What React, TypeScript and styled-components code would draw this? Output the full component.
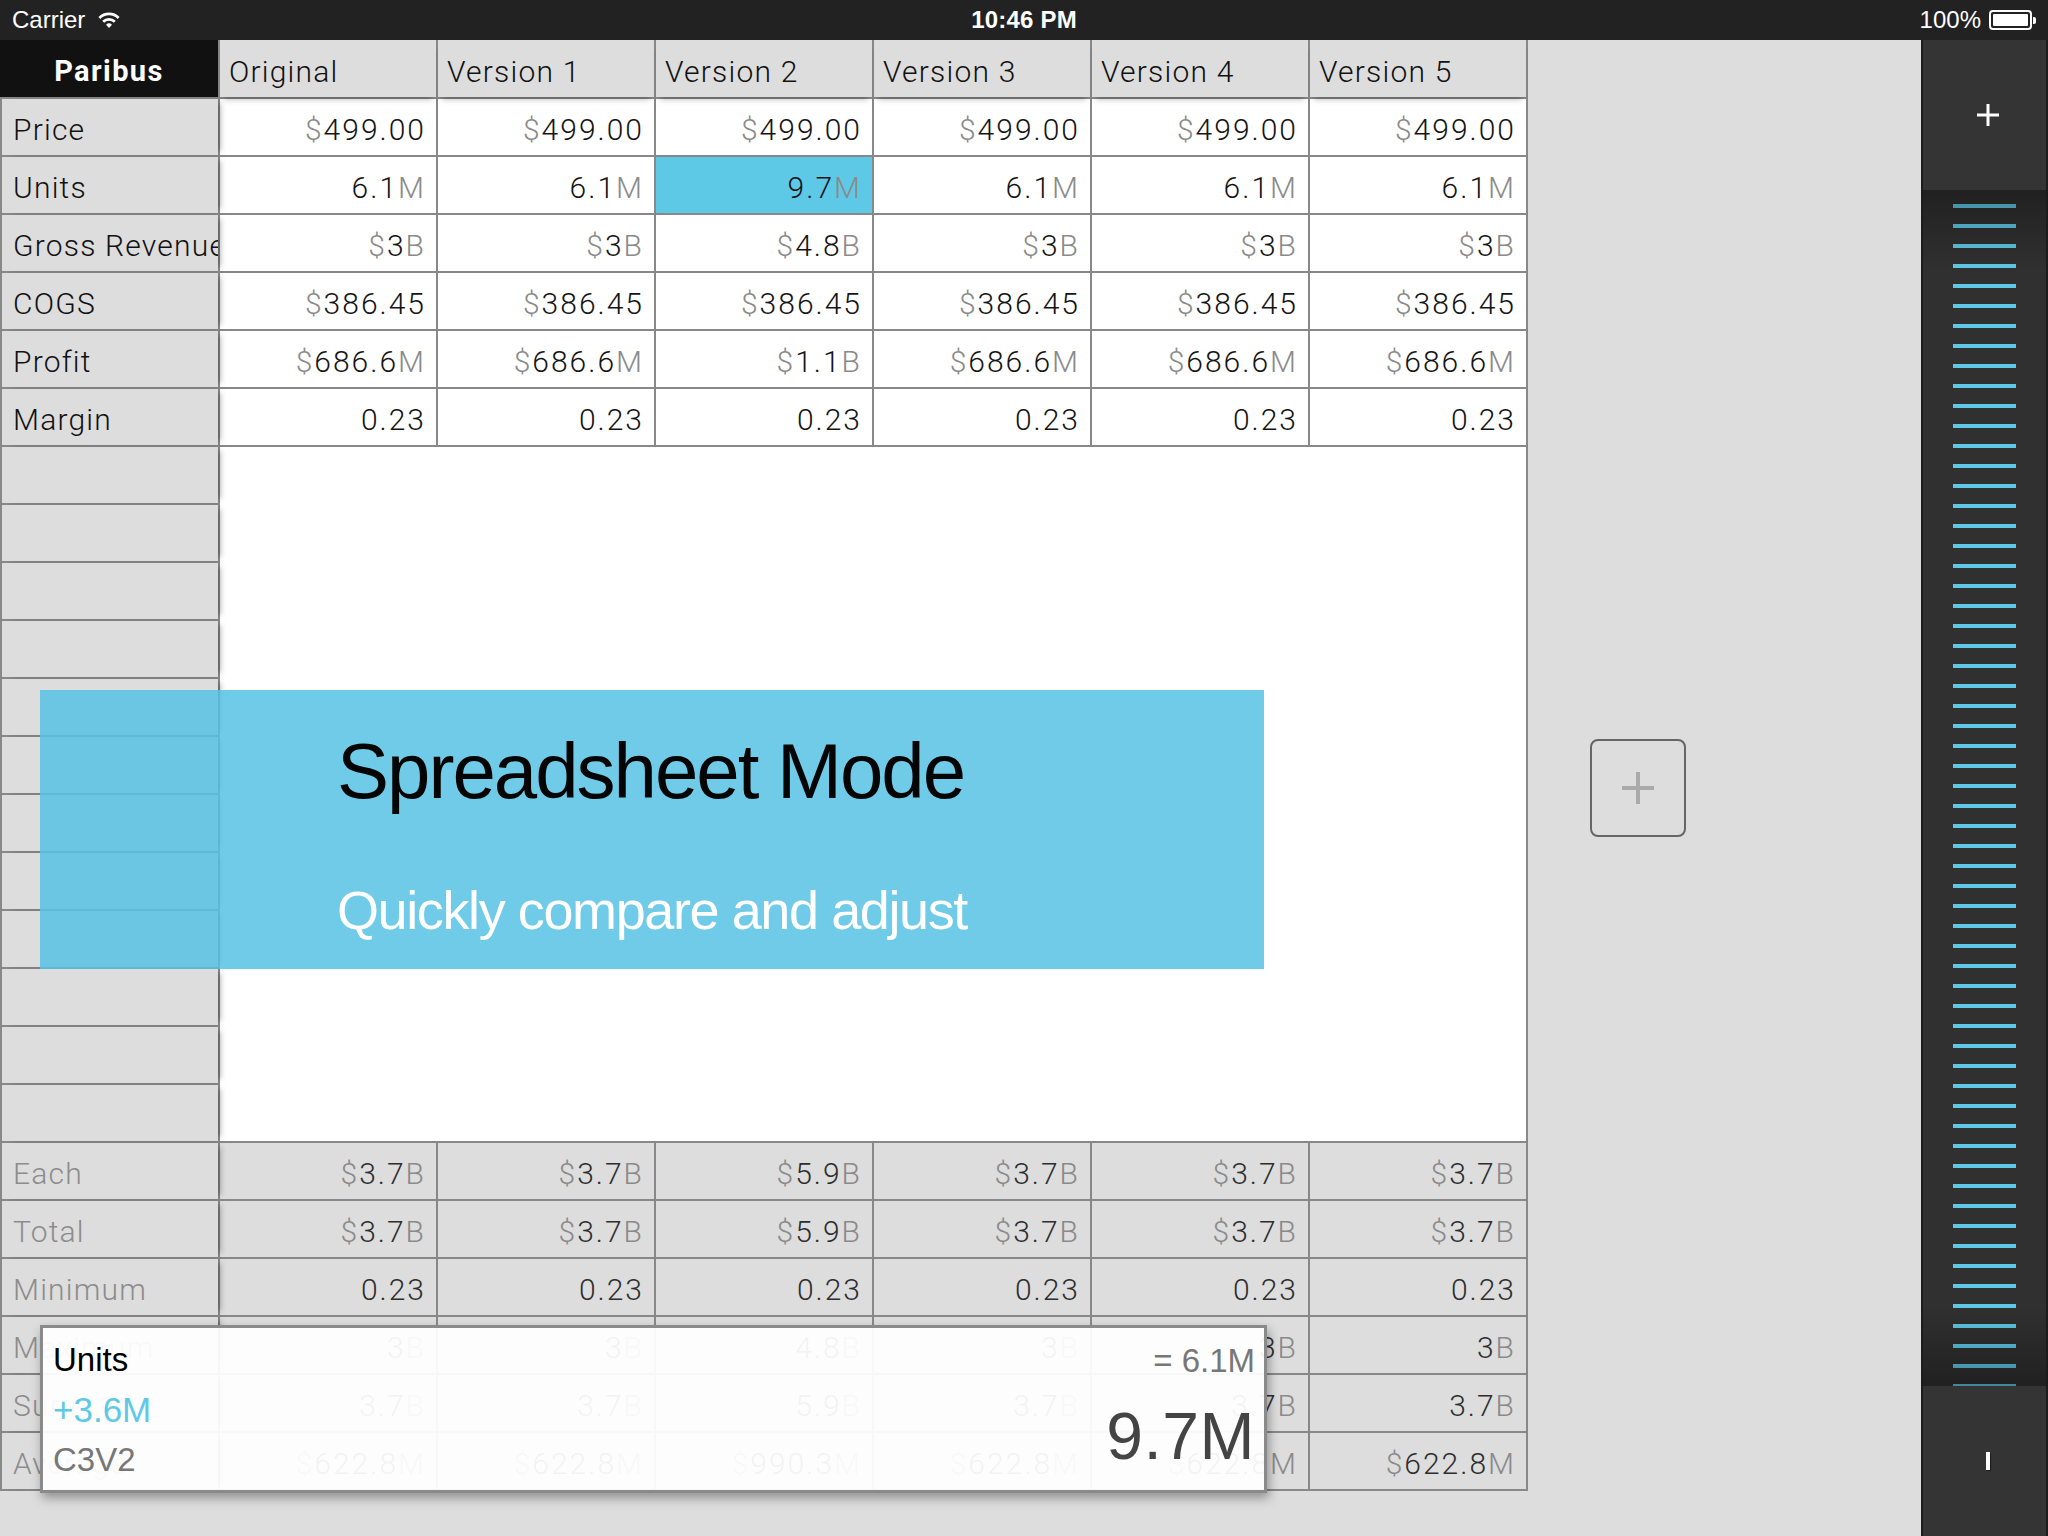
import React from "react";
import styled, { createGlobalStyle } from "styled-components";

const GlobalStyle = createGlobalStyle`
  html, body { margin: 0; padding: 0; background: #dddddd; }
  body {
    width: 2048px; height: 1536px; overflow: hidden;
    font-family: Roboto, "Liberation Sans", sans-serif;
  }
  #root { width: 2048px; height: 1536px; }
  * { box-sizing: border-box; }
`;

const Screen = styled.div`
  width: 2048px;
  height: 1536px;
  display: flex;
  flex-direction: column;
  background: #dddddd;
`;

/* ---------- status bar ---------- */
const StatusBar = styled.div`
  height: 40px;
  flex: none;
  background: #222222;
  color: #ffffff;
  display: grid;
  grid-template-columns: 1fr auto 1fr;
  align-items: center;
  padding: 0 12px;
  font-family: "Liberation Sans", Arial, sans-serif;
  font-size: 24px;
`;
const StatusLeft = styled.div`
  display: flex;
  align-items: center;
  gap: 12px;
`;
const StatusTime = styled.div`
  font-weight: 700;
  letter-spacing: 0.2px;
`;
const StatusRight = styled.div`
  display: flex;
  align-items: center;
  justify-content: flex-end;
  gap: 8px;
`;
const Battery = styled.div`
  width: 43px;
  height: 20px;
  border: 2px solid #ffffff;
  border-radius: 4px;
  padding: 2px;
  display: flex;
  margin-right: 4px;
  position: relative;
  &::after {
    content: "";
    position: absolute;
    right: -6px;
    top: 5px;
    width: 3px;
    height: 7px;
    background: #ffffff;
    border-radius: 0 2px 2px 0;
  }
`;
const BatteryFill = styled.div`
  flex: 1;
  background: #ffffff;
  border-radius: 1px;
`;

/* ---------- main ---------- */
const Main = styled.div`
  flex: 1;
  display: flex;
  min-height: 0;
`;
const TableArea = styled.div`
  width: 1528px;
  flex: none;
  position: relative;
`;
const Grid = styled.div`
  display: grid;
  grid-template-columns: 216px repeat(6, 216px);
  grid-template-rows: 57px repeat(24, 56px);
  gap: 2px;
  padding: 0 2px 2px 2px;
  background: #888888;
  width: 1528px;
  font-family: Roboto, "Liberation Sans", sans-serif;
  font-weight: 300;
  font-size: 30px;
  letter-spacing: 1.2px;
`;
const HeadCorner = styled.div`
  background: #111111;
  color: #ffffff;
  font-weight: 700;
  font-size: 29px;
  letter-spacing: 1.4px;
  display: flex;
  align-items: center;
  justify-content: center;
  padding-top: 5px;
  margin-left: -2px;
  position: relative;
  z-index: 3;
`;
const HeadCell = styled.div`
  background: #dddddd;
  color: #111111;
  display: flex;
  align-items: center;
  padding-left: 9px;
  padding-top: 5px;
  white-space: nowrap;
  position: relative;
  z-index: 1;
  box-shadow: 0 6px 6px -4px rgba(0, 0, 0, 0.3);
`;
const LabelCell = styled.div<{ $muted?: boolean }>`
  background: #dddddd;
  color: ${(p) => (p.$muted ? "#8c8c8c" : "#111111")};
  display: flex;
  align-items: center;
  padding-left: 11px;
  padding-top: 5px;
  white-space: nowrap;
  overflow: hidden;
  position: relative;
  z-index: 2;
  box-shadow: 6px 0 6px -4px rgba(0, 0, 0, 0.35);
`;
const DataCell = styled.div<{ $tone: "white" | "grey" | "hi" }>`
  background: ${(p) =>
    p.$tone === "hi" ? "#5ec9e6" : p.$tone === "grey" ? "#dddddd" : "#ffffff"};
  display: flex;
  align-items: center;
  justify-content: flex-end;
  padding-right: 10px;
  padding-top: 5px;
  white-space: nowrap;
  letter-spacing: 2px;
`;
const BlankArea = styled.div`
  grid-column: 2 / span 6;
  grid-row: span 12;
  background: #ffffff;
`;
const Affix = styled.span`
  color: #8a8a8a;
`;
const Digits = styled.span<{ $soft?: boolean }>`
  color: ${(p) => (p.$soft ? "#2e2e2e" : "#141414")};
`;

/* ---------- banner overlay ---------- */
const Banner = styled.div`
  position: absolute;
  left: 40px;
  top: 650px;
  width: 1224px;
  height: 279px;
  background: rgba(88, 195, 228, 0.86);
  z-index: 5;
  display: flex;
  flex-direction: column;
  padding: 42px 0 0 297px;
  font-family: "Liberation Sans", Arial, sans-serif;
`;
const BannerTitle = styled.div`
  font-size: 78px;
  line-height: 78px;
  letter-spacing: -2px;
  color: #050505;
`;
const BannerSub = styled.div`
  margin-top: 73px;
  font-size: 54px;
  line-height: 54px;
  letter-spacing: -1.4px;
  color: #ffffff;
`;

/* ---------- value popup ---------- */
const Popup = styled.div`
  position: absolute;
  left: 40px;
  top: 1285px;
  width: 1227px;
  height: 168px;
  border: 3px solid #8a8a8a;
  background: rgba(255, 255, 255, 0.94);
  box-shadow: 2px 5px 10px rgba(0, 0, 0, 0.35);
  z-index: 6;
  display: flex;
  justify-content: space-between;
  font-family: "Liberation Sans", Arial, sans-serif;
`;
const PopupLeft = styled.div`
  display: flex;
  flex-direction: column;
  padding: 15px 0 0 10px;
  gap: 16px;
`;
const PopupRight = styled.div`
  display: flex;
  flex-direction: column;
  align-items: flex-end;
  padding: 16px 9px 0 0;
  gap: 26px;
`;
const PopText = styled.div<{ $size: number; $color: string; $track?: number }>`
  font-size: ${(p) => p.$size}px;
  line-height: ${(p) => p.$size}px;
  letter-spacing: ${(p) => p.$track ?? 0}px;
  color: ${(p) => p.$color};
  white-space: nowrap;
`;

/* ---------- gap with add button ---------- */
const AddZone = styled.div`
  flex: 1;
  display: flex;
  align-items: center;
  padding: 0 0 0 62px;
`;
const AddBox = styled.div`
  width: 96px;
  height: 98px;
  border: 2px solid #666666;
  border-radius: 8px;
  display: flex;
  align-items: center;
  justify-content: center;
`;

/* ---------- right sidebar ---------- */
const Sidebar = styled.div`
  width: 127px;
  flex: none;
  border-left: 2px solid #1c1c1c;
  border-right: 2px solid #1c1c1c;
  background: #333333;
  display: flex;
  flex-direction: column;
`;
const SideCap = styled.div`
  height: 150px;
  flex: none;
  background: #343434;
  display: flex;
  align-items: center;
  justify-content: center;
  padding-left: 6px;
`;
const Ticks = styled.div`
  flex: 1;
  min-height: 0;
  position: relative;
  overflow: hidden;
  background: #303030;
  display: flex;
  flex-direction: column;
  align-items: center;
  gap: 16px;
  padding-top: 14px;
`;
const Tick = styled.div`
  width: 63px;
  height: 4px;
  flex: none;
  background: #5ec9e6;
`;
const Fade = styled.div<{ $edge: "top" | "bottom" }>`
  position: absolute;
  left: 0;
  right: 0;
  height: 80px;
  ${(p) => p.$edge}: 0;
  background: linear-gradient(
    ${(p) => (p.$edge === "top" ? "to bottom" : "to top")},
    rgba(0, 0, 0, 0.32),
    rgba(0, 0, 0, 0)
  );
`;
const Cursor = styled.div`
  width: 4px;
  height: 18px;
  background: #ffffff;
  box-shadow: 1px 1px 1px rgba(0, 0, 0, 0.5);
`;

/* ---------- data ---------- */
const columns = ["Original", "Version 1", "Version 2", "Version 3", "Version 4", "Version 5"];

type Row = { label: string; values: string[]; hi?: number };

const topRows: Row[] = [
  { label: "Price", values: Array(6).fill("$499.00") },
  { label: "Units", values: ["6.1M", "6.1M", "9.7M", "6.1M", "6.1M", "6.1M"], hi: 2 },
  { label: "Gross Revenue", values: ["$3B", "$3B", "$4.8B", "$3B", "$3B", "$3B"] },
  { label: "COGS", values: Array(6).fill("$386.45") },
  { label: "Profit", values: ["$686.6M", "$686.6M", "$1.1B", "$686.6M", "$686.6M", "$686.6M"] },
  { label: "Margin", values: Array(6).fill("0.23") },
];

const summaryRows: Row[] = [
  { label: "Each", values: ["$3.7B", "$3.7B", "$5.9B", "$3.7B", "$3.7B", "$3.7B"] },
  { label: "Total", values: ["$3.7B", "$3.7B", "$5.9B", "$3.7B", "$3.7B", "$3.7B"] },
  { label: "Minimum", values: Array(6).fill("0.23") },
  { label: "Maximum", values: ["3B", "3B", "4.8B", "3B", "3B", "3B"] },
  { label: "Sum", values: ["3.7B", "3.7B", "5.9B", "3.7B", "3.7B", "3.7B"] },
  { label: "Average", values: ["$622.8M", "$622.8M", "$990.3M", "$622.8M", "$622.8M", "$622.8M"] },
];

function Num({ v, soft }: { v: string; soft?: boolean }) {
  const m = v.match(/^(\$?)([\d.]+)([MB]?)$/);
  if (!m) return <Digits>{v}</Digits>;
  return (
    <>
      {m[1] && <Affix>{m[1]}</Affix>}
      <Digits $soft={soft}>{m[2]}</Digits>
      {m[3] && <Affix>{m[3]}</Affix>}
    </>
  );
}

function Wifi() {
  return (
    <svg width="24" height="18" viewBox="0 0 22 17">
      <path d="M1 5.6 A14 14 0 0 1 21 5.6 L19.2 7.5 A11.5 11.5 0 0 0 2.8 7.5 Z" fill="#fff" />
      <path d="M4.6 9.3 A9 9 0 0 1 17.4 9.3 L15.6 11.1 A6.5 6.5 0 0 0 6.4 11.1 Z" fill="#fff" />
      <path d="M8.2 12.9 A4 4 0 0 1 13.8 12.9 L11 16 Z" fill="#fff" />
    </svg>
  );
}

function Plus({ size, color, stroke }: { size: number; color: string; stroke: number }) {
  return (
    <svg width={size} height={size} viewBox={`0 0 ${size} ${size}`}>
      <rect x={(size - stroke) / 2} y={0} width={stroke} height={size} fill={color} />
      <rect x={0} y={(size - stroke) / 2} width={size} height={stroke} fill={color} />
    </svg>
  );
}

export default function App() {
  return (
    <>
      <GlobalStyle />
      <Screen>
        <StatusBar>
          <StatusLeft>
            <span>Carrier</span>
            <Wifi />
          </StatusLeft>
          <StatusTime>10:46 PM</StatusTime>
          <StatusRight>
            <span>100%</span>
            <Battery>
              <BatteryFill />
            </Battery>
          </StatusRight>
        </StatusBar>

        <Main>
          <TableArea>
            <Grid>
              <HeadCorner>Paribus</HeadCorner>
              {columns.map((c) => (
                <HeadCell key={c}>{c}</HeadCell>
              ))}

              {topRows.map((r) => (
                <React.Fragment key={r.label}>
                  <LabelCell>{r.label}</LabelCell>
                  {r.values.map((v, i) => (
                    <DataCell key={i} $tone={r.hi === i ? "hi" : "white"}>
                      <Num v={v} />
                    </DataCell>
                  ))}
                </React.Fragment>
              ))}

              <LabelCell />
              <BlankArea />
              {Array.from({ length: 11 }).map((_, i) => (
                <LabelCell key={`e${i}`} />
              ))}

              {summaryRows.map((r) => (
                <React.Fragment key={r.label}>
                  <LabelCell $muted>{r.label}</LabelCell>
                  {r.values.map((v, i) => (
                    <DataCell key={i} $tone="grey">
                      <Num v={v} soft />
                    </DataCell>
                  ))}
                </React.Fragment>
              ))}
            </Grid>

            <Banner>
              <BannerTitle>Spreadsheet Mode</BannerTitle>
              <BannerSub>Quickly compare and adjust</BannerSub>
            </Banner>

            <Popup>
              <PopupLeft>
                <PopText $size={33} $color="#000000">Units</PopText>
                <PopText $size={35} $color="#5ec9e6">+3.6M</PopText>
                <PopText $size={33} $color="#777777">C3V2</PopText>
              </PopupLeft>
              <PopupRight>
                <PopText $size={33} $color="#777777">= 6.1M</PopText>
                <PopText $size={66} $color="#444444" $track={0.5}>9.7M</PopText>
              </PopupRight>
            </Popup>
          </TableArea>

          <AddZone>
            <AddBox>
              <Plus size={32} color="#aaaaaa" stroke={4} />
            </AddBox>
          </AddZone>

          <Sidebar>
            <SideCap>
              <Plus size={22} color="#ffffff" stroke={3} />
            </SideCap>
            <Ticks>
              {Array.from({ length: 60 }).map((_, i) => (
                <Tick key={i} />
              ))}
              <Fade $edge="top" />
              <Fade $edge="bottom" />
            </Ticks>
            <SideCap>
              <Cursor />
            </SideCap>
          </Sidebar>
        </Main>
      </Screen>
    </>
  );
}
